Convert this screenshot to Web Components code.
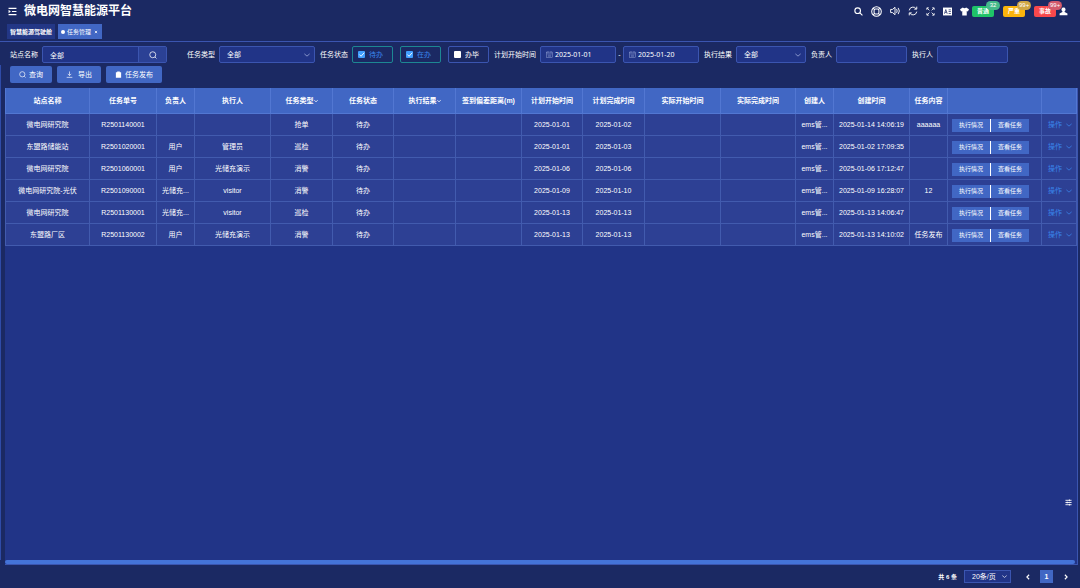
<!DOCTYPE html>
<html lang="zh-CN">
<head>
<meta charset="utf-8">
<meta name="viewport" content="width=device-width, initial-scale=1">
<title>微电网智慧能源平台</title>
<style>
  :root {
    --page: #1b2963;
    --panel: #213487;
    --row: #2d4094;
    --primary: #4167c4;
    --line: #3b55b0;
    --grid: #425bae;
    --text: #fff;
    --link: #3a86ec;
  }

  html,
  body {
    height: 100%;
    margin: 0;
  }

  body {
    background: var(--page);
    color: var(--text);
    font: 7px/10px "Liberation Sans", "Noto Sans CJK SC", sans-serif;
  }
</style>
</head>
<body>
<app-shell>
  <app-header slot="header" title-text="微电网智慧能源平台">
    <badge-button color="#1fc468" badge-color="#45b98b" count="32">普通</badge-button>
    <badge-button color="#fbb40c" badge-color="#d0a745" count="99+">严重</badge-button>
    <badge-button color="#f8484c" badge-color="#d25a6c" count="99+">事故</badge-button>
  </app-header>
  <app-tabs slot="tabs"></app-tabs>
  <filter-bar slot="filters"></filter-bar>
  <task-table></task-table>
  <page-footer slot="footer" total="6"></page-footer>
</app-shell>

<script>
const ICONS = {
  menu: `<path d="M1 2.500h14M7 8h8M1 13.500h14"/><path d="M1 5v6l4-3z" fill="currentColor" stroke="none"/>`,
  search: `<circle cx="6.500" cy="6.500" r="5"/><path d="M10 10l5 5"/>`,
  find: `<circle cx="7.500" cy="7.500" r="6"/><path d="M12 12l3 3"/>`,
  globe: `<circle cx="8" cy="8" r="7"/><rect x="4.500" y="4.500" width="7" height="7" rx="2"/><path d="M3 3l2 2M13 3l-2 2M3 13l2-2M13 13l-2-2"/>`,
  sound: `<path d="M1 5.500h3l4-3.500v12l-4-3.500h-3zM10.500 5q2 3 0 6M13 3q4 5 0 10"/>`,
  refresh: `<path d="M2 7a6 6 0 0 1 11-2.500M14 9a6 6 0 0 1-11 2.500"/><path d="M14 1v4h-4M2 15v-4h4"/>`,
  full: `<path d="M1.500 5v-3.500h3.500M11 1.500h3.500v3.500M14.500 11v3.500h-3.500M5 14.500h-3.500v-3.500M2 2l4 4M14 2l-4 4M14 14l-4-4M2 14l4-4"/>`,
  lang: `<rect x="0" y="1" width="16" height="14" fill="currentColor" stroke="none"/><path d="M2.500 12l2.500-7.500 2.500 7.500M3.500 9.500h3M10 5h4M10 8h4M10 11.500h4" stroke="#1b2963" stroke-width="1.300"/>`,
  shirt: `<path d="M5 1q3 2.500 6 0l5 3-2 4-2-1v8h-8v-8l-2 1-2-4z" fill="currentColor" stroke="none"/>`,
  user: `<path d="M8 1a3.500 3.500 0 0 1 2 6.500v1.500l5 2.500v3h-14v-3l5-2.500v-1.500a3.500 3.500 0 0 1 2-6.500z" fill="currentColor" stroke="none"/>`,
  download: `<path d="M8 1v9M4 6.500l4 4 4-4M1.500 14.500h13"/>`,
  board: `<path d="M2 3h3v-2h6v2h3v12.500h-12z" fill="currentColor" stroke="none"/>`,
  calendar: `<rect x="1.500" y="2.500" width="13" height="12"/><path d="M1.500 6.500h13M4.500 0v4M11.500 0v4M4 9.500h8M4 12h8"/>`,
  down: `<path d="M1 5l7 6 7-6"/>`,
  left: `<path d="M11 2l-6 6 6 6"/>`,
  right: `<path d="M5 2l6 6-6 6"/>`,
  close: `<path d="M5 5l6 6M11 5l-6 6"/>`,
  check: `<path d="M3 8l4 4 7-8"/>`,
  sliders: `<path d="M1 3h14M1 8h14M1 13h14M10 1v4M5 6v4M10 11v4"/>`,
};

const icon = (name, size = 8, weight = 1.5) =>
  `<svg viewBox="0 0 16 16" width="${size}" height="${size}" fill="none" stroke="currentColor" stroke-width="${weight}" aria-hidden="true">${ICONS[name]}</svg>`;

const BASE = /* css */`
  * {
    box-sizing: border-box;
  }

  svg {
    display: block;
    flex: none;
  }

  button,
  input,
  select {
    margin: 0;
    padding: 0;
    border: 0;
    color: inherit;
    font: inherit;
    background: none;
    appearance: none;
  }

  button {
    display: flex;
    align-items: center;
    justify-content: center;
    white-space: nowrap;
    cursor: pointer;
  }

  a {
    color: inherit;
    text-decoration: none;
  }
`;

class BaseElement extends HTMLElement {
  constructor() {
    super();
    this.attachShadow({ mode: "open" });
  }

  connectedCallback() {
    this.shadowRoot.innerHTML = `<style>${BASE}${this.constructor.styles}</style>${this.render()}`;
  }
}

class AppShell extends BaseElement {
  static get styles() {
    return /* css */`
      :host {
        display: flex;
        flex-direction: column;
        min-height: 100vh;
      }

      main {
        flex: 1;
        display: flex;
        flex-direction: column;
        padding: 4px 2px 0 5px;
        background: linear-gradient(#2f4ba8, #2f4ba8) 0 23px / 1px calc(100% - 28px) no-repeat;
      }

      ::slotted(task-table) {
        flex: 1;
      }
    `;
  }

  render() {
    return /* html */`
      <slot name="header"></slot>
      <slot name="tabs"></slot>
      <main>
        <slot name="filters"></slot>
        <slot></slot>
      </main>
      <slot name="footer"></slot>`;
  }
}

class AppHeader extends BaseElement {
  static get styles() {
    return /* css */`
      :host {
        display: flex;
        align-items: center;
        height: 22px;
        padding: 0 12px 0 8px;
      }

      h1 {
        flex: 1;
        margin: 0 0 0 7px;
        font-size: 12px;
        line-height: 20px;
      }

      nav {
        display: flex;
        align-items: center;
        gap: 8px;
        margin-right: 3px;
      }

      .alarms {
        display: flex;
        gap: 9px;
        margin-right: 3px;
      }
    `;
  }

  render() {
    const tools = [
      ["search", "搜索", 9], ["globe", "帮助", 11], ["sound", "声音", 10], ["refresh", "刷新", 10],
      ["full", "全屏", 9], ["lang", "语言", 9], ["shirt", "主题", 9],
    ];
    return /* html */`
      <button aria-label="菜单">${icon("menu", 9, 2)}</button>
      <h1>${this.getAttribute("title-text")}</h1>
      <nav>${tools.map(([name, label, size]) => `<button aria-label="${label}">${icon(name, size, name === "search" ? 2 : 1.5)}</button>`).join("")}</nav>
      <div class="alarms"><slot></slot></div>
      <button aria-label="用户">${icon("user", 9)}</button>`;
  }
}

class BadgeButton extends BaseElement {
  static get styles() {
    return /* css */`
      :host {
        display: block;
        position: relative;
      }

      button {
        width: 22px;
        height: 11px;
        border-radius: 2px;
        background: var(--color);
        font-size: 6px;
        font-weight: bold;
      }

      span {
        position: absolute;
        top: -5px;
        left: 14px;
        min-width: 14px;
        padding: 0 2px;
        border-radius: 5px;
        background: var(--badge);
        font-size: 6px;
        line-height: 9px;
        text-align: center;
      }
    `;
  }

  render() {
    this.style.setProperty("--color", this.getAttribute("color"));
    this.style.setProperty("--badge", this.getAttribute("badge-color"));
    return `<button><slot></slot></button><span>${this.getAttribute("count")}</span>`;
  }
}

class AppTabs extends BaseElement {
  static get styles() {
    return /* css */`
      :host {
        display: flex;
        align-items: flex-start;
        gap: 3px;
        height: 20px;
        box-sizing: border-box;
        padding: 2px 7px 0;
        border-bottom: 1px solid var(--line);
      }

      a {
        display: flex;
        align-items: center;
        gap: 3px;
        height: 15px;
        padding: 0 3px;
        background: #233786;
        font-size: 6px;
        font-weight: bold;
      }

      .active {
        gap: 2px;
        background: var(--primary);
        font-weight: normal;
      }

      .active::before {
        content: "";
        width: 4px;
        height: 4px;
        border-radius: 50%;
        background: white;
      }
    `;
  }

  render() {
    return /* html */`
      <a href="#cockpit">智慧能源驾驶舱</a>
      <a href="#tasks" class="active">任务管理<button aria-label="关闭">${icon("close", 6, 2)}</button></a>`;
  }
}

class FormField extends BaseElement {
  static get styles() {
    return /* css */`
      :host {
        display: flex;
        align-items: center;
        gap: 4px;
        height: 17px;
        white-space: nowrap;
      }

      .box {
        display: flex;
        align-items: center;
        width: var(--width, 71px);
        height: 17px;
        border: 1px solid var(--line);
        border-radius: 2px;
        background: var(--panel);
      }

      .box input,
      .box select {
        flex: 1;
        min-width: 0;
        height: 100%;
        padding-left: 7px;
        outline: 0;
      }

      .box button {
        width: 28px;
        height: 100%;
        border-left: 1px solid var(--line);
        background: #2b4195;
      }

      .box > svg {
        margin-right: 4px;
        color: #a3b0de;
      }

      .date {
        font-family: "Noto Sans", "Noto Sans CJK SC", sans-serif;
      }

      .date > svg {
        margin: 0 0 0 5px;
      }

      .date input {
        padding-left: 2px;
      }

      .range {
        display: flex;
        align-items: center;
      }

      .range > span {
        width: 7px;
        text-align: center;
      }
    `;
  }

  control() {
    const value = this.getAttribute("value") || "";
    switch (this.getAttribute("type")) {
      case "lookup":
        return `<div class="box"><input id="control" value="${value}"><button aria-label="选择站点">${icon("find", 8)}</button></div>`;
      case "select":
        return `<div class="box"><select id="control"><option>${value}</option></select>${icon("down", 6, 2)}</div>`;
      case "range": {
        const [from, to] = value.split(",");
        return /* html */`<div class="range">
          <div class="box date">${icon("calendar", 7, 1)}<input id="control" value="${from}"></div>
          <span>-</span>
          <div class="box date">${icon("calendar", 7, 1)}<input aria-label="结束日期" value="${to}"></div>
        </div>`;
      }
      default:
        return `<div class="box"><input id="control" value="${value}"></div>`;
    }
  }

  render() {
    return `<label for="control">${this.getAttribute("label")}</label>${this.control()}`;
  }
}

class CheckPills extends BaseElement {
  static get styles() {
    return /* css */`
      :host {
        display: flex;
        align-items: center;
        gap: 4px;
        white-space: nowrap;
      }

      .pills {
        display: flex;
        gap: 7px;
      }

      label {
        display: flex;
        align-items: center;
        gap: 4px;
        width: 41px;
        height: 17px;
        padding-left: 5px;
        border: 1px solid var(--line);
        border-radius: 2px;
      }

      label.on {
        border-color: #1d8793;
        color: var(--link);
      }

      .tick {
        display: grid;
      }

      .tick > * {
        grid-area: 1 / 1;
        width: 7px;
        height: 7px;
      }

      input {
        border-radius: 1px;
        background: white;
      }

      input:checked {
        background: #409eff;
      }

      .tick svg {
        color: white;
        pointer-events: none;
      }
    `;
  }

  render() {
    const items = [["待办", true], ["在办", true], ["办毕", false]];
    return /* html */`
      <span>任务状态</span>
      <div class="pills">${items.map(([text, on]) => `
        <label class="${on ? "on" : ""}"><span class="tick"><input type="checkbox" ${on ? "checked" : ""}>${on ? icon("check", 7, 2) : ""}</span>${text}</label>`).join("")}
      </div>`;
  }
}

class FilterBar extends BaseElement {
  static get styles() {
    return /* css */`
      :host {
        display: block;
        padding: 0 5px 5px;
      }

      form,
      .actions {
        display: flex;
        flex-wrap: wrap;
        gap: 3px 5px;
      }

      form {
        margin-bottom: 3px;
      }

      .station {
        --width: 125px;
        margin-right: 15px;
      }

      .kind {
        --width: 96px;
      }

      .plan {
        --width: 76px;
      }

      .result {
        --width: 70px;
      }

      .actions button {
        gap: 3px;
        height: 17px;
        padding: 0 9px;
        border-radius: 2px;
        background: var(--primary);
      }
    `;
  }

  render() {
    return /* html */`
      <form>
        <form-field class="station" type="lookup" label="站点名称" value="全部"></form-field>
        <form-field class="kind" type="select" label="任务类型" value="全部"></form-field>
        <check-pills></check-pills>
        <form-field class="plan" type="range" label="计划开始时间" value="2025-01-01,2025-01-20"></form-field>
        <form-field class="result" type="select" label="执行结果" value="全部"></form-field>
        <form-field label="负责人"></form-field>
        <form-field label="执行人"></form-field>
      </form>
      <div class="actions">
        <button>${icon("find", 7)}查询</button>
        <button>${icon("download", 7)}&nbsp;导出</button>
        <button>${icon("board", 7)}任务发布</button>
      </div>`;
  }
}

const COLUMNS = [
  ["站点名称", 85], ["任务单号", 67], ["负责人", 38], ["执行人", 76], ["任务类型", 62, true],
  ["任务状态", 61], ["执行结果", 62, true], ["签到偏差距离(m)", 66], ["计划开始时间", 61],
  ["计划完成时间", 62], ["实际开始时间", 76], ["实际完成时间", 75], ["创建人", 38],
  ["创建时间", 76], ["任务内容", 38], ["", 94], ["", 35],
];

const TASKS = [
  ["微电网研究院", "R2501140001", "", "", "抢单", "2025-01-01", "2025-01-02", "2025-01-14 14:06:19", "aaaaaa"],
  ["东盟路储能站", "R2501020001", "用户", "管理员", "巡检", "2025-01-01", "2025-01-03", "2025-01-02 17:09:35", ""],
  ["微电网研究院", "R2501060001", "用户", "光储充演示", "消警", "2025-01-06", "2025-01-06", "2025-01-06 17:12:47", ""],
  ["微电网研究院-光伏", "R2501090001", "光储充...", "visitor", "消警", "2025-01-09", "2025-01-10", "2025-01-09 16:28:07", "12"],
  ["微电网研究院", "R2501130001", "光储充...", "visitor", "巡检", "2025-01-13", "2025-01-13", "2025-01-13 14:06:47", ""],
  ["东盟路厂区", "R2501130002", "用户", "光储充演示", "消警", "2025-01-13", "2025-01-13", "2025-01-13 14:10:02", "任务发布"],
];

class TaskTable extends BaseElement {
  static get styles() {
    return /* css */`
      :host {
        display: flex;
        flex-direction: column;
        justify-content: space-between;
        position: relative;
        border-right: 1px solid var(--line);
        border-bottom: 1px solid var(--line);
        background: var(--panel);
      }

      table {
        width: 100%;
        table-layout: fixed;
        border-collapse: separate;
        border-spacing: 0;
        text-align: center;
      }

      th,
      td {
        height: 22px;
        padding: 0;
        border: solid var(--grid);
        border-width: 0 1px 1px 0;
        background: var(--row);
        white-space: nowrap;
      }

      th:first-child,
      td:first-child {
        border-left-width: 1px;
      }

      th {
        height: 26px;
        border-color: #5277d2;
        background: var(--primary);
      }

      th svg {
        display: inline-block;
        vertical-align: middle;
      }

      .buttons {
        display: flex;
        padding: 1px 0 0 4px;
      }

      .buttons button {
        width: 38px;
        height: 13px;
        background: var(--primary);
        font-size: 6px;
      }

      .buttons button + button {
        width: 39px;
        border-left: 1px solid white;
      }

      .more {
        gap: 4px;
        width: 100%;
        padding-left: 2px;
        color: var(--link);
      }

      .scroll {
        height: 4px;
        margin-right: 2px;
        border-radius: 2px;
        background: #4473d8;
      }

      .settings {
        position: absolute;
        right: 5px;
        bottom: 58px;
      }
    `;
  }

  row([site, code, owner, worker, kind, start, end, created, content]) {
    const cells = [site, code, owner, worker, kind, "待办", "", "", start, end, "", "", "ems管...", created, content];
    return /* html */`<tr>
      ${cells.map((text) => `<td>${text}</td>`).join("")}
      <td><div class="buttons"><button>执行情况</button><button>查看任务</button></div></td>
      <td><button class="more">操作${icon("down", 6, 2)}</button></td>
    </tr>`;
  }

  render() {
    return /* html */`
      <table>
        <colgroup>${COLUMNS.map(([, width]) => `<col style="width: ${width}px">`).join("")}</colgroup>
        <thead><tr>${COLUMNS.map(([text, , sort]) => `<th scope="col">${text}${sort ? icon("down", 4, 3) : ""}</th>`).join("")}</tr></thead>
        <tbody>${TASKS.map((task) => this.row(task)).join("")}</tbody>
      </table>
      <div class="scroll"></div>
      <button class="settings" aria-label="设置">${icon("sliders", 7, 2)}</button>`;
  }
}

class PageFooter extends BaseElement {
  static get styles() {
    return /* css */`
      :host {
        display: flex;
        align-items: center;
        justify-content: flex-end;
        height: 23px;
        padding-right: 8px;
      }

      .total {
        margin-right: 7px;
        font-size: 6px;
        font-weight: bold;
      }

      .size {
        display: flex;
        align-items: center;
        width: 47px;
        height: 13px;
        margin-right: 4px;
        padding-right: 3px;
        border: 1px solid var(--line);
        background: var(--panel);
      }

      select {
        flex: 1;
        min-width: 0;
        padding-left: 7px;
      }

      .page,
      .step {
        width: 13px;
        height: 13px;
        margin-left: 6px;
        font-weight: bold;
      }

      .page {
        background: var(--primary);
      }
    `;
  }

  render() {
    return /* html */`
      <span class="total">共 ${this.getAttribute("total")} 条</span>
      <span class="size"><select aria-label="每页条数"><option>20条/页</option></select>${icon("down", 5, 2)}</span>
      <button class="step" aria-label="上一页">${icon("left", 6, 3)}</button>
      <button class="page">1</button>
      <button class="step" aria-label="下一页">${icon("right", 6, 3)}</button>`;
  }
}

customElements.define("app-shell", AppShell);
customElements.define("app-header", AppHeader);
customElements.define("badge-button", BadgeButton);
customElements.define("app-tabs", AppTabs);
customElements.define("form-field", FormField);
customElements.define("check-pills", CheckPills);
customElements.define("filter-bar", FilterBar);
customElements.define("task-table", TaskTable);
customElements.define("page-footer", PageFooter);
</script>
</body>
</html>
